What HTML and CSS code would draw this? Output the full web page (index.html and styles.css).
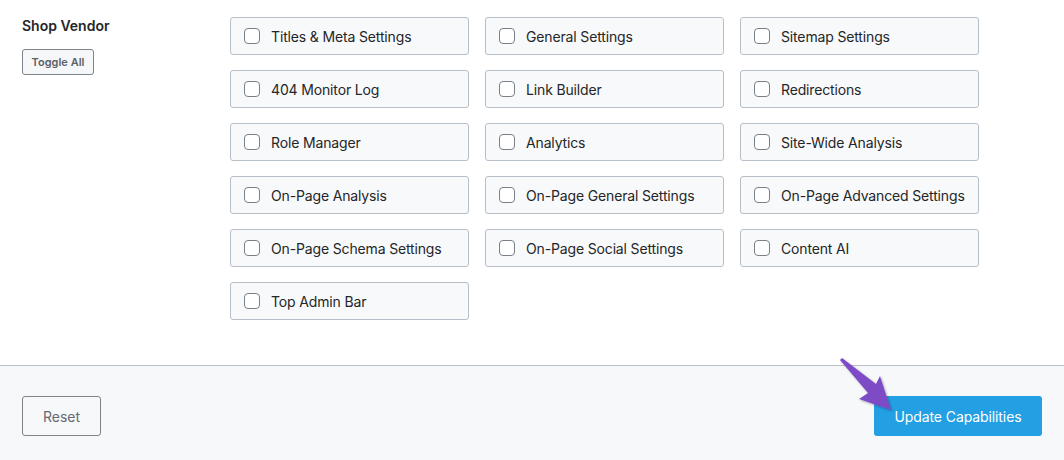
FILE: index.html
```html
<!DOCTYPE html>
<html>
<head>
<meta charset="utf-8">
<link rel="stylesheet" href="styles.css">
</head>
<body>
<div class="page">
  <div class="main">
    <div class="side">
      <div class="role">Shop Vendor</div>
      <button class="toggle">Toggle All</button>
    </div>
    <div class="grid">
      <label class="cap"><span class="box"></span>Titles &amp; Meta Settings</label>
      <label class="cap"><span class="box"></span>General Settings</label>
      <label class="cap"><span class="box"></span>Sitemap Settings</label>
      <label class="cap"><span class="box"></span>404 Monitor Log</label>
      <label class="cap"><span class="box"></span>Link Builder</label>
      <label class="cap"><span class="box"></span>Redirections</label>
      <label class="cap"><span class="box"></span>Role Manager</label>
      <label class="cap"><span class="box"></span>Analytics</label>
      <label class="cap"><span class="box"></span>Site-Wide Analysis</label>
      <label class="cap"><span class="box"></span>On-Page Analysis</label>
      <label class="cap"><span class="box"></span>On-Page General Settings</label>
      <label class="cap"><span class="box"></span>On-Page Advanced Settings</label>
      <label class="cap"><span class="box"></span>On-Page Schema Settings</label>
      <label class="cap"><span class="box"></span>On-Page Social Settings</label>
      <label class="cap"><span class="box"></span>Content AI</label>
      <label class="cap"><span class="box"></span>Top Admin Bar</label>
    </div>
  </div>
  <div class="footer">
    <button class="reset">Reset</button>
    <button class="update">Update Capabilities</button>
    <svg class="arrow" width="70" height="70" viewBox="0 0 70 70">
      <defs>
        <filter id="sh" x="-20%" y="-20%" width="150%" height="150%">
          <feDropShadow dx="1" dy="1" stdDeviation="1.2" flood-color="#000" flood-opacity="0.35"/>
        </filter>
      </defs>
      <path d="M4 3 L6 1 L40 27 L44 19 L55 53 L23 42 L32 36 Z" fill="#7e4cc6" filter="url(#sh)"/>
    </svg>
  </div>
</div>
</body>
</html>
```
FILE: styles.css
```css
* { box-sizing: border-box; }
html, body { margin: 0; padding: 0; }
body {
  width: 1064px;
  height: 460px;
  background: #fff;
  font-family: Inter, "Noto Sans", "Liberation Sans", sans-serif;
  color: #242628;
  overflow: hidden;
}
.page { position: relative; height: 460px; }
.main {
  display: flex;
  align-items: flex-start;
  padding: 17px 0 0 22px;
  height: 366px;
  border-bottom: 1px solid #b9c0c8;
}
.side { width: 208px; }
.role {
  font-size: 14px;
  font-weight: 600;
  line-height: 18px;
  color: #242628;
}
.toggle {
  margin-top: 14px;
  height: 26px;
  width: 72px;
  padding: 0;
  font-family: inherit;
  font-size: 11px;
  font-weight: 600;
  color: #5c6167;
  background: #f6f7f8;
  border: 1px solid #7d848b;
  border-radius: 3px;
}
.grid {
  display: grid;
  grid-template-columns: repeat(3, 239px);
  grid-auto-rows: 38px;
  column-gap: 16px;
  row-gap: 15px;
}
.cap {
  display: flex;
  align-items: center;
  height: 38px;
  padding-left: 13px;
  background: #f8f9fa;
  border: 1px solid #b6bec7;
  border-radius: 3px;
  font-size: 14px;
  letter-spacing: -0.15px;
  color: #242628;
}
.box {
  width: 16px;
  height: 16px;
  border: 1px solid #7a8088;
  border-radius: 4px;
  background: #fff;
  margin-right: 11px;
  flex: none;
}
.footer {
  background: #f7f8fa;
  height: 94px;
  display: flex;
  justify-content: space-between;
  align-items: flex-start;
  padding: 30px 22px 0 22px;
}
.reset {
  width: 79px;
  height: 40px;
  font-family: inherit;
  font-size: 14px;
  color: #646a71;
  background: #f7f8fa;
  border: 1px solid #7d848b;
  border-radius: 3px;
}
.update {
  width: 168px;
  height: 40px;
  font-family: inherit;
  font-size: 14px;
  letter-spacing: -0.1px;
  color: #fff;
  background: #22a0e3;
  border: none;
  border-radius: 3px;
}
.arrow {
  position: absolute;
  left: 836px;
  top: 357px;
}
```
